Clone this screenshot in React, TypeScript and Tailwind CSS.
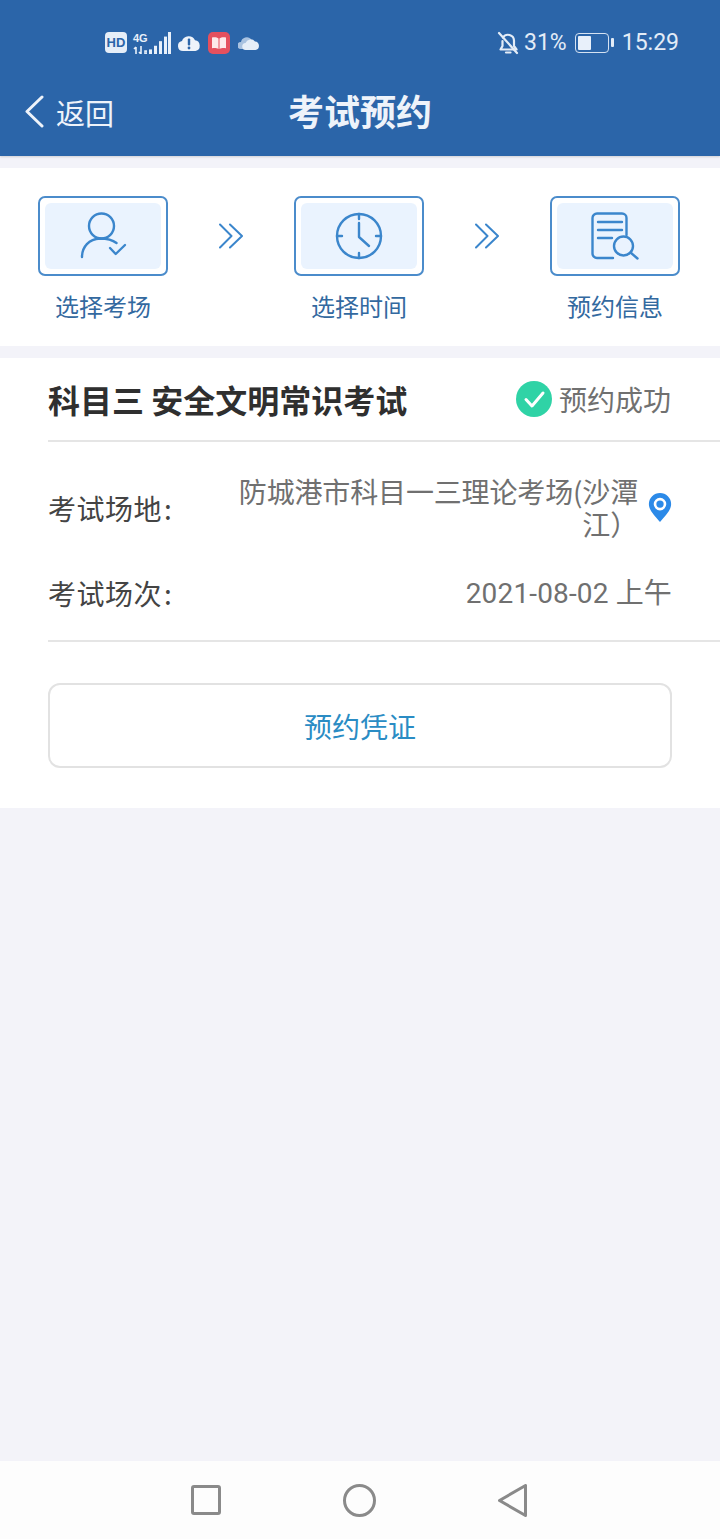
import React from 'react';

const FONT = "font-['Noto_Sans_CJK_SC','Roboto',sans-serif]";

// 状态栏图标
function StatusLeft() {
  return (
    <div className="flex items-center gap-[7px] text-[#e8f0fa]">
      <div className="w-[22px] h-[21px] rounded-[4px] bg-[#e6eef8] text-[#2b65a9] text-[13px] leading-[21px] font-bold text-center font-['Liberation_Sans',sans-serif]">
        HD
      </div>
      <div className="flex items-end gap-[2px] h-[22px] -ml-[1px]">
        <div className="flex flex-col justify-between h-[22px] w-[14px]">
          <span className="text-[11px] leading-[12px] font-bold font-['Liberation_Sans',sans-serif]">4G</span>
          <svg width="14" height="8" viewBox="0 0 14 8" className="text-[#e8f0fa]">
            <path d="M3 8V1M1 3l2-2M8 0v8M6 6l2 2M12 5h2v3h-2z" stroke="currentColor" strokeWidth="1.6" fill="none" />
          </svg>
        </div>
        <svg width="22" height="22" viewBox="0 0 22 24" preserveAspectRatio="none">
          <rect x="0" y="19" width="3" height="5" fill="#e8f0fa" />
          <rect x="5" y="15" width="3" height="9" fill="#e8f0fa" />
          <rect x="10" y="10" width="3" height="14" fill="#e8f0fa" />
          <rect x="15" y="5" width="3" height="19" fill="#e8f0fa" />
          <rect x="19" y="0" width="3" height="24" fill="#e8f0fa" />
        </svg>
      </div>
      <svg width="24" height="18" viewBox="0 0 24 18" className="-ml-[1px]">
        <path d="M6 17a5 5 0 0 1-1-9.9A7 7 0 0 1 18 6.2 5.5 5.5 0 0 1 18.500 17z" fill="#eef3fa" />
        <rect x="10.800" y="4.500" width="2.400" height="7" rx="1" fill="#2b65a9" />
        <circle cx="12" cy="14" r="1.400" fill="#2b65a9" />
      </svg>
      <div className="w-[22px] h-[22px] rounded-[5px] bg-[#e5505e] flex items-center justify-center">
        <svg width="16" height="14" viewBox="0 0 16 14">
          <path d="M1 1.500C3.500 1 6 1.200 7.500 2.500V13C6 12 3.500 11.800 1 12.200zM15 1.500C12.500 1 10 1.200 8.500 2.500V13C10 12 12.500 11.800 15 12.200z" fill="#fde9ea" />
        </svg>
      </div>
      <svg width="22" height="16" viewBox="0 0 22 16" className="ml-[1px]">
        <path d="M3 14a3.500 3.500 0 0 1 0-7 6 6 0 0 1 10-3l-3 10z" fill="#a9c2e0" />
        <path d="M8 15a3.500 3.500 0 0 1-.5-7A5.500 5.500 0 0 1 17 6.500 4.300 4.300 0 0 1 17.500 15z" fill="#e6eef8" />
      </svg>
    </div>
  );
}

function StatusRight() {
  return (
    <div className="flex items-center text-[#e3ecf7] text-[23px] leading-none font-['Roboto',sans-serif]">
      <svg width="22" height="24" viewBox="0 0 22 24" fill="none" stroke="currentColor" strokeWidth="2.200" strokeLinecap="round" strokeLinejoin="round">
        <path d="M6 6.500A6 6 0 0 1 17 9.500V15l2.500 3.500H3.500L5.500 15V10" />
        <path d="M9 21.500h4.500" />
        <path d="M2 2l18 20" />
      </svg>
      <span className="ml-[5px]">31%</span>
      <div className="ml-[8px] w-[34px] h-[20px] rounded-[4px] border-[1.5px] border-[#d5e2f2] p-[2px]">
        <div className="w-[13px] h-full rounded-[1px] bg-[#e8f0fa]" />
      </div>
      <div className="ml-[2px] w-[3px] h-[9px] rounded-[1px] bg-[#e3ecf7]" />
      <span className="ml-[8px]">15:29</span>
    </div>
  );
}

// 步骤图标
function StepUser() {
  return (
    <svg width="48" height="48" viewBox="0 0 48 48" fill="none" stroke="#3b86cc" strokeWidth="2.400" strokeLinecap="round" strokeLinejoin="round">
      <circle cx="22.500" cy="14" r="12.500" />
      <path d="M3 45C3 35 10 27 21 26.500c6 0 12 1 16.500 4.500" />
      <path d="M31 36l5.700 6L46 33" />
    </svg>
  );
}

function StepClock() {
  return (
    <svg width="48" height="48" viewBox="0 0 48 48" fill="none" stroke="#3b86cc" strokeWidth="2.400" strokeLinecap="round" strokeLinejoin="round">
      <circle cx="24" cy="24" r="22" />
      <path d="M24 2v5M24 41v5M2 24h5M41 24h5" />
      <path d="M24 11v14l10 9" />
    </svg>
  );
}

function StepDoc() {
  return (
    <svg width="48" height="48" viewBox="0 0 48 48" fill="none" stroke="#3b86cc" strokeWidth="2.400" strokeLinecap="round" strokeLinejoin="round">
      <path d="M22 46H6a4.500 4.500 0 0 1-4.500-4.500V6A4.500 4.500 0 0 1 6 1.500h25A4.500 4.500 0 0 1 35.500 6v17" />
      <path d="M7 10h24M7 18h24M7 26h14" />
      <circle cx="32.500" cy="34" r="9.500" />
      <path d="M39.500 40.500l7 6" />
    </svg>
  );
}

function Arrows() {
  return (
    <svg width="24" height="26" viewBox="0 0 24 26" fill="none" stroke="#3b86cc" strokeWidth="2" strokeLinecap="round" strokeLinejoin="round">
      <path d="M1 1.500L12.500 13 1 24.500" />
      <path d="M11 1.500L23 13 11 24.500" />
    </svg>
  );
}

function Step({ label, children }: { label: string; children: React.ReactNode }) {
  return (
    <div className="flex flex-col items-center w-[130px]">
      <div className="w-[130px] h-[80px] rounded-[7px] border-2 border-[#4b8ccb] p-[5px]">
        <div className="w-full h-full rounded-[6px] bg-[#eaf3fe] flex items-center justify-center">{children}</div>
      </div>
      <span className="mt-[13px] text-[24px] leading-[34px] text-[#33699f]">{label}</span>
    </div>
  );
}

export default function App() {
  return (
    <div className={`flex flex-col h-[1539px] w-[720px] bg-[#f3f3f9] overflow-hidden ${FONT}`}>
      {/* ヘッダー */}
      <header className="bg-[#2b65a9] h-[156px] shrink-0 shadow-[0_1px_2px_rgba(0,0,0,0.15)]">
        <div className="h-[84px] pl-[105px] pr-[41px] flex items-center justify-between pt-[1px]">
          <StatusLeft />
          <StatusRight />
        </div>
        <div className="relative h-[58px] flex items-center justify-center -mt-[2px]">
          <div className="absolute left-[24px] top-0 h-full flex items-center text-[#eef3fa]">
            <svg width="20" height="33" viewBox="0 0 20 33" fill="none" stroke="currentColor" strokeWidth="3" strokeLinecap="round" strokeLinejoin="round">
              <path d="M18 2L3 16.500 18 31" />
            </svg>
            <span className="text-[29px] ml-[12px] pt-[3px]">返回</span>
          </div>
          <h1 className="text-[36px] font-bold text-[#eef3fa] pb-[2px]">考试预约</h1>
        </div>
      </header>

      {/* ステップ */}
      <section className="mt-[12px] h-[178px] bg-white pl-[38px] pr-[40px] pt-[28px] flex justify-between items-start">
        <Step label="选择考场"><StepUser /></Step>
        <div className="h-[80px] flex items-center"><Arrows /></div>
        <Step label="选择时间"><StepClock /></Step>
        <div className="h-[80px] flex items-center"><Arrows /></div>
        <Step label="预约信息"><StepDoc /></Step>
      </section>

      {/* 内容 */}
      <section className="mt-[12px] h-[450px] bg-white pl-[48px]">
        <div className="h-[84px] pr-[49px] flex items-center justify-between border-b-2 border-[#e5e5e5]">
          <h2 className="text-[32px] font-bold text-[#2f2f2f]">科目三 安全文明常识考试</h2>
          <div className="flex items-center gap-[7px]">
            <svg width="36" height="36" viewBox="0 0 36 36">
              <circle cx="18" cy="18" r="18" fill="#2fd3a6" />
              <path d="M10 18.500l6 6.500 11-13" fill="none" stroke="#fff" strokeWidth="3" strokeLinecap="round" strokeLinejoin="round" />
            </svg>
            <span className="text-[28px] text-[#707070]">预约成功</span>
          </div>
        </div>

        <div className="pr-[48px] h-[200px] border-b-2 border-[#e5e5e5] pt-[32px]">
          <div className="flex items-center justify-between h-[68px]">
            <span className="text-[28px] tracking-[0.5px] text-[#444444]">考试场地<span className="ml-[2px]">:</span></span>
            <div className="flex items-center">
              <p className="w-[405px] text-right text-[28px] leading-[33px] tracking-[-0.15px] text-[#707070]">防城港市科目一三理论考场(沙潭江）</p>
              <svg width="24" height="29" viewBox="0 0 24 30" className="ml-[10px] mb-[2px]">
                <path d="M12 0a11.500 11.500 0 0 1 11.500 11.500c0 6-5 11-11.500 18.500C5.500 22.500.5 17.500.5 11.500A11.500 11.500 0 0 1 12 0z" fill="#2c8ae8" />
                <circle cx="12" cy="11.500" r="6.500" fill="#fff" />
                <circle cx="12" cy="11.500" r="3.800" fill="#2c8ae8" />
              </svg>
            </div>
          </div>
          <div className="flex items-center justify-between mt-[34px] h-[34px]">
            <span className="text-[28px] tracking-[0.5px] text-[#444444]">考试场次<span className="ml-[2px]">:</span></span>
            <span className="text-[28px] tracking-[0.15px] pt-[2px] text-[#707070] font-['Roboto','Noto_Sans_CJK_SC',sans-serif]">2021-08-02 上午</span>
          </div>
        </div>

        <div className="pr-[48px] pt-[41px]">
          <button className="w-full h-[85px] rounded-[12px] border-2 border-[#e2e2e2] bg-white text-[28px] text-[#2a8cc4]">
            预约凭证
          </button>
        </div>
      </section>

      {/* ナビゲーションバー */}
      <nav className="mt-auto h-[78px] bg-[#fdfdfd] shrink-0 flex items-center justify-center gap-[122px] pr-[2px]">
        <svg width="30" height="30" viewBox="0 0 30 30" fill="none" stroke="#8a8a8a" strokeWidth="3" strokeLinejoin="round">
          <rect x="1.500" y="1.500" width="27" height="27" rx="1.500" />
        </svg>
        <svg width="33" height="33" viewBox="0 0 33 33" fill="none" stroke="#8a8a8a" strokeWidth="3">
          <circle cx="16.500" cy="16.500" r="15" />
        </svg>
        <svg width="29" height="33" viewBox="0 0 29 33" fill="none" stroke="#8a8a8a" strokeWidth="3" strokeLinejoin="round">
          <path d="M27.500 1.500v30L1.500 16.500z" />
        </svg>
      </nav>
    </div>
  );
}
